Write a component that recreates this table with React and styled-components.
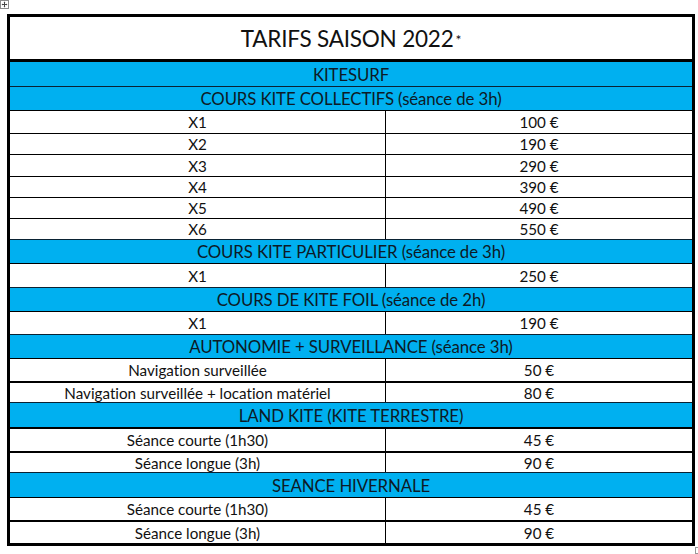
import React from 'react';
import styled, { createGlobalStyle } from 'styled-components';

const GlobalStyle = createGlobalStyle`
  html, body {
    margin: 0;
    padding: 0;
    background: #ffffff;
  }
  body {
    font-family: Lato, "Open Sans", "Liberation Sans", sans-serif;
    font-variant-ligatures: none;
    color: #111;
  }
`;

const Page = styled.div`
  position: relative;
  width: 698px;
  height: 554px;
  padding: 14px 0 0 7px;
  box-sizing: border-box;
`;

const MoveHandle = styled.svg`
  position: absolute;
  top: 0;
  left: 0;
`;

const ResizeHandle = styled.div`
  position: absolute;
  left: 695px;
  top: 547px;
  width: 5px;
  height: 5px;
  border: 1px solid #9a9a9a;
  background: #fff;
`;

const Table = styled.div`
  width: 688px;
  border: 3px solid #000;
  box-sizing: border-box;
  display: flex;
  flex-direction: column;
`;

const Title = styled.div`
  height: 42px;
  display: flex;
  align-items: center;
  justify-content: center;
  font-size: 22.5px;
  letter-spacing: -0.2px;
  color: #111;
  border-bottom: 3px solid #000;
`;

const Star = styled.span`
  font-size: 14px;
  margin-left: 2px;
  margin-top: 3px;
`;

const Section = styled.div`
  height: ${(p) => p.$h}px;
  background: #00b0f0;
  border-top: ${(p) => p.$line}px solid #0a2233;
  display: flex;
  align-items: center;
  justify-content: center;
  font-size: 16.8px;
  color: #0d1a26;
  letter-spacing: -0.1px;
  white-space: nowrap;
  &:first-of-type {
    border-top: none;
  }
`;

const Row = styled.div`
  height: ${(p) => p.$h}px;
  border-top: ${(p) => p.$line}px solid #000;
  display: grid;
  grid-template-columns: 375px 1fr;
  font-size: 15.2px;
  color: #111;
`;

const Cell = styled.div`
  display: flex;
  align-items: center;
  justify-content: center;
  white-space: nowrap;
  & + & {
    border-left: 1px solid #000;
  }
`;

const data = [
  { type: 's', label: 'KITESURF', h: 24, line: 0 },
  { type: 's', label: 'COURS KITE COLLECTIFS (séance de 3h)', h: 23, line: 1 },
  { type: 'r', label: 'X1', price: '100 €', h: 22, line: 1 },
  { type: 'r', label: 'X2', price: '190 €', h: 20, line: 1 },
  { type: 'r', label: 'X3', price: '290 €', h: 21, line: 1 },
  { type: 'r', label: 'X4', price: '390 €', h: 20, line: 1 },
  { type: 'r', label: 'X5', price: '490 €', h: 20, line: 1 },
  { type: 'r', label: 'X6', price: '550 €', h: 20, line: 1 },
  { type: 's', label: 'COURS KITE PARTICULIER (séance de 3h)', h: 23, line: 1 },
  { type: 'r', label: 'X1', price: '250 €', h: 23, line: 1 },
  { type: 's', label: 'COURS DE KITE FOIL (séance de 2h)', h: 23, line: 1 },
  { type: 'r', label: 'X1', price: '190 €', h: 22, line: 1 },
  { type: 's', label: 'AUTONOMIE + SURVEILLANCE (séance 3h)', h: 23, line: 1 },
  { type: 'r', label: 'Navigation surveillée', price: '50 €', h: 22, line: 1 },
  { type: 'r', label: 'Navigation surveillée + location matériel', price: '80 €', h: 19, line: 2 },
  { type: 's', label: 'LAND KITE (KITE TERRESTRE)', h: 24, line: 1 },
  { type: 'r', label: 'Séance courte (1h30)', price: '45 €', h: 22, line: 2 },
  { type: 'r', label: 'Séance longue (3h)', price: '90 €', h: 19, line: 2 },
  { type: 's', label: 'SEANCE HIVERNALE', h: 24, line: 1 },
  { type: 'r', label: 'Séance courte (1h30)', price: '45 €', h: 22, line: 1 },
  { type: 'r', label: 'Séance longue (3h)', price: '90 €', h: 21, line: 2 },
];

export default function App() {
  return (
    <Page>
      <GlobalStyle />
      <MoveHandle width="9" height="9" viewBox="0 0 9 9">
        <rect x="0.5" y="0.5" width="8" height="8" fill="#fff" stroke="#8a8a8a" />
        <path d="M4.5 2v5M2 4.5h5" stroke="#444" strokeWidth="1" />
        <path d="M4.5 1.6l-1 1h2zM4.5 7.4l-1-1h2zM1.6 4.5l1-1v2zM7.4 4.5l-1-1v2z" fill="#444" />
      </MoveHandle>
      <Table>
        <Title>
          TARIFS SAISON 2022<Star>*</Star>
        </Title>
        {data.map((d, i) =>
          d.type === 's' ? (
            <Section key={i} $h={d.h} $line={d.line}>
              {d.label}
            </Section>
          ) : (
            <Row key={i} $h={d.h} $line={d.line}>
              <Cell>{d.label}</Cell>
              <Cell>{d.price}</Cell>
            </Row>
          )
        )}
      </Table>
      <ResizeHandle />
    </Page>
  );
}
